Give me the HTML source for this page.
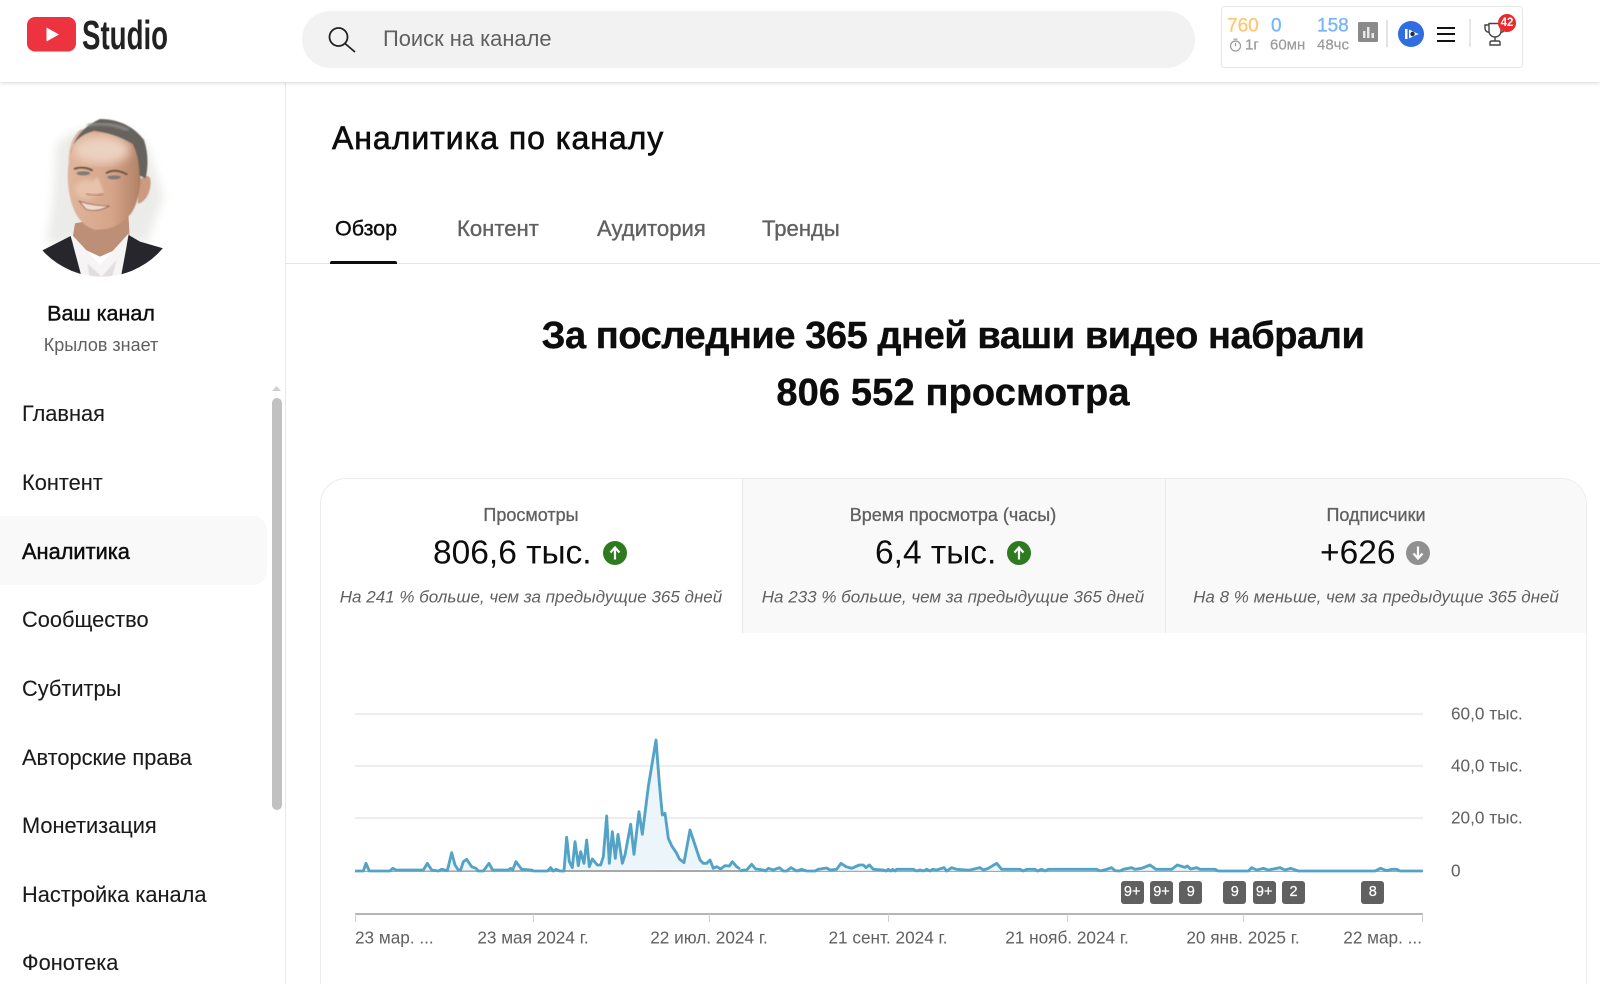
<!DOCTYPE html>
<html lang="ru"><head><meta charset="utf-8"><title>Studio</title>
<style>
html,body{margin:0;padding:0;width:1600px;height:984px;overflow:hidden;background:#fff}
body{position:relative;font-family:"Liberation Sans",Arial,sans-serif;color:#0d0d0d}
.a{position:absolute}
.t{position:absolute;white-space:nowrap;line-height:1;transform:translateY(-50%)}
.c{position:absolute;white-space:nowrap;line-height:1;transform:translate(-50%,-50%)}
.r{position:absolute;white-space:nowrap;line-height:1;transform:translate(-100%,-50%)}
.nav{font-size:21.8px;left:22px;color:#1a1a1a;-webkit-text-stroke:.1px #1a1a1a}
.tab{font-size:22.1px;color:#606060;-webkit-text-stroke:.35px #606060;top:229px}
.lab{font-size:18px;color:#606060;-webkit-text-stroke:.3px #606060;top:515px}
.val{font-size:33.5px;color:#0d0d0d;top:553px}
.sub{font-size:17px;font-style:italic;color:#606060;top:597px}
.ax{font-size:17.2px;color:#606060;top:938px}
.yl{font-size:17.2px;color:#606060;left:1451px}
.bd{position:absolute;top:881px;width:23px;height:23px;background:#606060;border-radius:3px;color:#fff;font-size:14.5px;line-height:23px;text-align:center;-webkit-text-stroke:.2px #fff}
.g{position:absolute;left:355px;width:1068px;height:2px;background:#eeeeee}
.tk{position:absolute;top:914px;width:1px;height:8px;background:#cfcfcf}
.xs{font-size:15px;color:#9a9a9a;-webkit-text-stroke:.2px #9a9a9a;top:45px}
.xn{font-size:19px;top:26px;-webkit-text-stroke:.3px}
</style></head><body>

<!-- main structures -->
<div class="a" style="left:285px;top:82px;width:1px;height:902px;background:#e8e8e8"></div>
<div class="a" style="left:285px;top:263px;width:1315px;height:1px;background:#e5e5e5"></div>
<div class="a" style="left:330px;top:261px;width:67px;height:3px;background:#0d0d0d;border-radius:2px 2px 0 0"></div>

<!-- header -->
<div class="a" style="left:0;top:0;width:1600px;height:82px;background:#fff;box-shadow:0 1px 4px rgba(0,0,0,.16)"></div>
<svg class="a" style="left:27px;top:17px" width="50" height="35" viewBox="0 0 50 35"><rect x="0" y="0" width="49" height="34.5" rx="8" fill="#ee3340"/><path d="M19.500 10.500L19.500 24.500L32 17.500Z" fill="#fff"/></svg>
<div class="a" style="left:82px;top:12px;font-size:41px;line-height:47px;font-weight:700;color:#222;transform:scaleX(.675);transform-origin:0 0;white-space:nowrap">Studio</div>
<div class="a" style="left:302px;top:11px;width:893px;height:57px;border-radius:29px;background:#f2f2f2"></div>
<svg class="a" style="left:328px;top:26px" width="30" height="28" viewBox="0 0 30 28" fill="none" stroke="#222" stroke-width="1.800"><circle cx="10.500" cy="11" r="9"/><path d="M17 17.500L27 26"/></svg>
<div class="t" style="left:383px;top:39px;font-size:21.900px;color:#606060">Поиск на канале</div>

<!-- extension -->
<div class="a" style="left:1221px;top:6px;width:300px;height:60px;border:1px solid #e6e6e6;border-radius:3px;background:#fff"></div>
<div class="t xn" style="left:1227px;color:#fdc770;-webkit-text-stroke-color:#fdc770">760</div>
<div class="t xn" style="left:1271px;color:#74b5fb;-webkit-text-stroke-color:#74b5fb">0</div>
<div class="t xn" style="left:1317px;color:#74b5fb;-webkit-text-stroke-color:#74b5fb">158</div>
<svg class="a" style="left:1229px;top:38px" width="13" height="14" viewBox="0 0 13 14" fill="none" stroke="#999" stroke-width="1.200"><circle cx="6.500" cy="8" r="5"/><path d="M4.500 1.200H8.500M6.500 5V8.200"/></svg>
<div class="t xs" style="left:1245px">1г</div>
<div class="t xs" style="left:1270px">60мн</div>
<div class="t xs" style="left:1317px">48чс</div>
<svg class="a" style="left:1358px;top:22px" width="20" height="20" viewBox="0 0 20 20"><rect width="20" height="20" rx="1.500" fill="#8a8a8a"/><path d="M5 9v7h2.500V9zM9 5v11h2.500V5zM13.500 11v5h2.500v-5z" fill="#e8e8e8"/></svg>
<div class="a" style="left:1386px;top:20px;width:2px;height:27px;background:#e3e3e3"></div>
<svg class="a" style="left:1398px;top:21px" width="26" height="26" viewBox="0 0 26 26"><circle cx="13" cy="13" r="13" fill="#2f6de0"/><path d="M7 8h2.500v10H7zM11 8.500l7 3.500 3 1-3 1-7 3.500z" fill="#fff"/><circle cx="14.500" cy="13" r="2.200" fill="#1a2a55"/></svg>
<div class="a" style="left:1437px;top:27px;width:18px;height:2px;background:#111"></div>
<div class="a" style="left:1437px;top:33px;width:18px;height:2px;background:#111"></div>
<div class="a" style="left:1437px;top:39.500px;width:18px;height:2px;background:#111"></div>
<div class="a" style="left:1469px;top:19px;width:2px;height:28px;background:#e8e8e8"></div>
<svg class="a" style="left:1484px;top:22px" width="22" height="24" viewBox="0 0 22 24" fill="none" stroke="#444" stroke-width="1.400"><path d="M5 1.500H17V9C17 13 14 15 11 15S5 13 5 9ZM5 3H1V6C1 9 3 10 5 10.500M17 3h4V6C21 9 19 10 17 10.500M11 15v4M6 23v-2.500c0-1 1-1.500 2-1.500h6c1 0 2 .5 2 1.500V23Z"/></svg>
<div class="a" style="left:1498px;top:14px;width:18px;height:18px;border-radius:50%;background:#ea2a2a;color:#fff;font-size:11.500px;font-weight:700;line-height:18px;text-align:center">42</div>

<!-- avatar -->
<svg class="a" style="left:0;top:100px" width="300" height="300" viewBox="0 0 900 900">
<defs>
<clipPath id="cp"><circle cx="305" cy="290" r="240"/></clipPath>
<filter id="b8"><feGaussianBlur stdDeviation="14"/></filter>
<filter id="b5"><feGaussianBlur stdDeviation="7"/></filter>
<filter id="b3"><feGaussianBlur stdDeviation="3"/></filter>
<filter id="b2"><feGaussianBlur stdDeviation="1.500"/></filter>
<linearGradient id="sk" x1="0" y1="0" x2="1" y2="0"><stop offset="0" stop-color="#dfb59b"/><stop offset=".6" stop-color="#d6a58a"/><stop offset="1" stop-color="#b08065"/></linearGradient>
</defs>
<g clip-path="url(#cp)">
<path d="M170 130Q300 30 440 130L490 290L440 430H140L160 300Z" fill="#ebebe9" filter="url(#b8)"/>
<path d="M225 370L215 430L300 470L390 430L385 340Z" fill="#bd8f76"/>
<path d="M212 400L240 535H362L386 400L300 495Z" fill="#f6f4f4"/>
<path d="M120 455L212 408L246 535H100ZM386 405L362 535H510L490 445L420 425Z" fill="#26262c"/>
<path d="M262 490L305 530L350 480L335 535H270Z" fill="#e2dede" filter="url(#b2)"/>
<g filter="url(#b2)">
<path d="M418 240Q452 212 452 250Q448 300 413 312Z" fill="#cb9a80"/>
<path d="M206 190Q205 120 240 90Q310 70 385 100Q420 150 422 240Q415 320 385 350Q340 395 280 388Q230 370 212 300Q198 240 206 190Z" fill="url(#sk)"/>
<ellipse cx="305" cy="150" rx="85" ry="42" fill="#ecd2c0" filter="url(#b8)"/>
<ellipse cx="260" cy="268" rx="35" ry="28" fill="#e8c3ac" filter="url(#b5)"/>
<path d="M212 165Q222 92 300 57Q385 58 432 120Q450 175 437 235L418 226Q418 170 398 132Q345 100 282 93Q240 103 219 136Z" fill="#66645f"/>
<path d="M262 76Q320 62 385 90" stroke="#93918c" stroke-width="7" fill="none" filter="url(#b3)"/>
</g>
<path d="M222 207Q250 196 278 212M318 220Q345 203 382 224" stroke="#6f5646" stroke-width="6" fill="none" filter="url(#b2)"/>
<ellipse cx="250" cy="220" rx="20" ry="6" fill="#7e7a76" filter="url(#b2)"/>
<ellipse cx="342" cy="232" rx="20" ry="6" fill="#7c7c78" filter="url(#b2)"/>
<path d="M292 230Q266 262 260 275Q278 288 312 278Q302 252 292 230Z" fill="#e7c2ac" filter="url(#b3)"/>
<path d="M258 280Q280 292 310 282" stroke="#a87058" stroke-width="4" fill="none" filter="url(#b3)"/>
<path d="M238 304Q280 318 328 318Q290 338 258 328Z" fill="#eedbce" stroke="#a4685a" stroke-width="3" filter="url(#b2)"/>
</g>
</svg>
<div class="c" style="left:101px;top:314px;font-size:21.500px;color:#0d0d0d;-webkit-text-stroke:.4px #0d0d0d">Ваш канал</div>
<div class="c" style="left:101px;top:345px;font-size:18px;color:#606060">Крылов знает</div>

<!-- sidebar nav -->
<div class="a" style="left:0;top:516px;width:267px;height:69px;background:#f9f9f9;border-radius:0 14px 14px 0"></div>
<div class="t nav" style="top:414px">Главная</div>
<div class="t nav" style="top:483px">Контент</div>
<div class="t nav" style="top:552px;color:#0d0d0d;-webkit-text-stroke:.45px #0d0d0d">Аналитика</div>
<div class="t nav" style="top:620px">Сообщество</div>
<div class="t nav" style="top:689px">Субтитры</div>
<div class="t nav" style="top:758px">Авторские права</div>
<div class="t nav" style="top:826px">Монетизация</div>
<div class="t nav" style="top:895px">Настройка канала</div>
<div class="t nav" style="top:963px">Фонотека</div>
<svg class="a" style="left:271px;top:385px" width="11" height="7"><path d="M1 6L5.500 1L10 6Z" fill="#cfcfcf"/></svg>
<div class="a" style="left:272px;top:398px;width:10px;height:412px;background:#c1c1c1;border-radius:5px"></div>

<!-- title & tabs -->
<div class="t" style="left:332px;top:138px;font-size:32px;letter-spacing:.96px;color:#0d0d0d;-webkit-text-stroke:.65px #0d0d0d">Аналитика по каналу</div>
<div class="t tab" style="left:335px;font-size:21.500px;color:#0d0d0d;-webkit-text-stroke:.4px #0d0d0d">Обзор</div>
<div class="t tab" style="left:457px">Контент</div>
<div class="t tab" style="left:597px">Аудитория</div>
<div class="t tab" style="left:762px">Тренды</div>

<!-- headline -->
<div class="c" style="left:953px;top:336px;font-size:38px;font-weight:700;letter-spacing:-.43px;color:#0d0d0d;-webkit-text-stroke:.4px #0d0d0d">За последние 365 дней ваши видео набрали</div>
<div class="c" style="left:953px;top:393px;font-size:38px;font-weight:700;letter-spacing:.15px;color:#0d0d0d;-webkit-text-stroke:.4px #0d0d0d">806 552 просмотра</div>

<!-- metric card -->
<div class="a" style="left:320px;top:478px;width:1267px;height:506px;border:1px solid #ececec;border-bottom:0;border-radius:26px 26px 0 0;box-sizing:border-box;background:#fff"></div>
<div class="a" style="left:742px;top:479px;width:423px;height:154px;background:#f9f9f9;border-left:1px solid #e8e8e8;box-sizing:border-box"></div>
<div class="a" style="left:1165px;top:479px;width:421px;height:154px;background:#f9f9f9;border-left:1px solid #e8e8e8;box-sizing:border-box;border-top-right-radius:25px"></div>

<div class="c lab" style="left:531px">Просмотры</div>
<div class="t val" style="left:433px">806,6 тыс.</div>
<svg class="a" style="left:603px;top:541px" width="24" height="24" viewBox="0 0 24 24"><circle cx="12" cy="12" r="12" fill="#2e7a1f"/><path d="M12 18.500V7M7.500 11.500L12 6.500L16.500 11.500" fill="none" stroke="#fff" stroke-width="2.200"/></svg>
<div class="c sub" style="left:531px">На 241 % больше, чем за предыдущие 365 дней</div>

<div class="c lab" style="left:953px">Время просмотра (часы)</div>
<div class="t val" style="left:875px">6,4 тыс.</div>
<svg class="a" style="left:1007px;top:541px" width="24" height="24" viewBox="0 0 24 24"><circle cx="12" cy="12" r="12" fill="#2e7a1f"/><path d="M12 18.500V7M7.500 11.500L12 6.500L16.500 11.500" fill="none" stroke="#fff" stroke-width="2.200"/></svg>
<div class="c sub" style="left:953px">На 233 % больше, чем за предыдущие 365 дней</div>

<div class="c lab" style="left:1376px">Подписчики</div>
<div class="t val" style="left:1320px">+626</div>
<svg class="a" style="left:1406px;top:541px" width="24" height="24" viewBox="0 0 24 24"><circle cx="12" cy="12" r="12" fill="#909090"/><path d="M12 5.500V17M7.500 12.500L12 17.500L16.500 12.500" fill="none" stroke="#fff" stroke-width="2.200"/></svg>
<div class="c sub" style="left:1376px">На 8 % меньше, чем за предыдущие 365 дней</div>

<!-- chart -->
<div class="g" style="top:713px"></div>
<div class="g" style="top:765px"></div>
<div class="g" style="top:817px"></div>
<div class="a" style="left:355px;top:870px;width:1068px;height:2px;background:#a8a8a8"></div>
<div class="a" style="left:355px;top:913px;width:1068px;height:2px;background:#b5b5b5"></div>
<div class="tk" style="left:355px"></div><div class="tk" style="left:533px"></div><div class="tk" style="left:709px"></div><div class="tk" style="left:888px"></div><div class="tk" style="left:1067px"></div><div class="tk" style="left:1243px"></div><div class="tk" style="left:1422px"></div>
<svg class="a" style="left:0;top:0" width="1600" height="984" fill="#e9f3f8" fill-opacity=".85" stroke="#52a3c6" stroke-width="8.600" stroke-linejoin="round">
<polyline transform="translate(340 700) scale(.33333)" points="45,513 70,513 78,490 88,513 150,513 158,505 168,510 250,510 262,490 275,510 295,513 305,508 322,512 335,458 345,495 355,510 362,510 370,485 380,478 395,500 408,505 415,513 430,513 447,490 458,510 505,510 512,505 518,510 528,485 545,508 575,510 580,513 622,513 632,503 640,513 648,508 660,513 672,513 680,412 688,485 697,503 705,425 715,497 722,455 732,490 740,420 748,500 757,477 772,495 782,495 790,470 800,348 808,490 817,395 826,475 834,403 847,490 855,465 872,373 882,463 897,335 907,403 925,260 948,120 958,250 967,345 975,340 985,415 995,437 1010,460 1018,477 1032,488 1050,390 1080,480 1090,490 1100,490 1110,480 1120,505 1130,500 1142,507 1155,497 1168,498 1177,485 1190,500 1200,507"/>
<polyline transform="translate(740 700) scale(.33333)" points="0,513 10,510 20,510 35,493 47,507 70,510 76,513 85,505 100,510 118,503 130,513 140,513 153,503 170,513 185,508 200,513 225,513 235,508 260,504 270,510 290,508 303,490 318,500 335,505 358,495 370,495 378,503 388,495 400,508 430,510 438,513 445,508 452,513 458,508 465,513 470,508 520,508 530,513 540,510 550,513 560,508 570,513 578,508 590,510 612,503 620,513 635,503 650,508 680,510 690,510 720,503 730,510 745,505 770,490 785,508 840,508 850,513 860,508 885,508 892,513 905,508 915,513 925,508 1070,508 1080,513"/>
<polyline transform="translate(1100 700) scale(.33333)" points="0,513 20,508 35,503 45,512 60,513 70,508 95,503 105,508 125,505 150,495 168,508 215,508 232,495 255,502 262,498 272,507 290,503 300,508 345,508 355,513 445,513 455,503 470,510 490,505 505,510 540,503 555,510 572,505 595,513 825,513 842,505 860,512 875,508 890,508 900,513 968,513"/>
</svg>

<div class="bd" style="left:1120.700px">9+</div>
<div class="bd" style="left:1150px">9+</div>
<div class="bd" style="left:1179.300px">9</div>
<div class="bd" style="left:1223.300px">9</div>
<div class="bd" style="left:1252.700px">9+</div>
<div class="bd" style="left:1282px">2</div>
<div class="bd" style="left:1361.300px">8</div>

<div class="t yl" style="top:714px">60,0 тыс.</div>
<div class="t yl" style="top:766px">40,0 тыс.</div>
<div class="t yl" style="top:818px">20,0 тыс.</div>
<div class="t yl" style="top:871px">0</div>

<div class="t ax" style="left:355px">23 мар. ...</div>
<div class="c ax" style="left:533px">23 мая 2024 г.</div>
<div class="c ax" style="left:709px">22 июл. 2024 г.</div>
<div class="c ax" style="left:888px">21 сент. 2024 г.</div>
<div class="c ax" style="left:1067px">21 нояб. 2024 г.</div>
<div class="c ax" style="left:1243px">20 янв. 2025 г.</div>
<div class="r ax" style="left:1422px">22 мар. ...</div>
</body></html>
